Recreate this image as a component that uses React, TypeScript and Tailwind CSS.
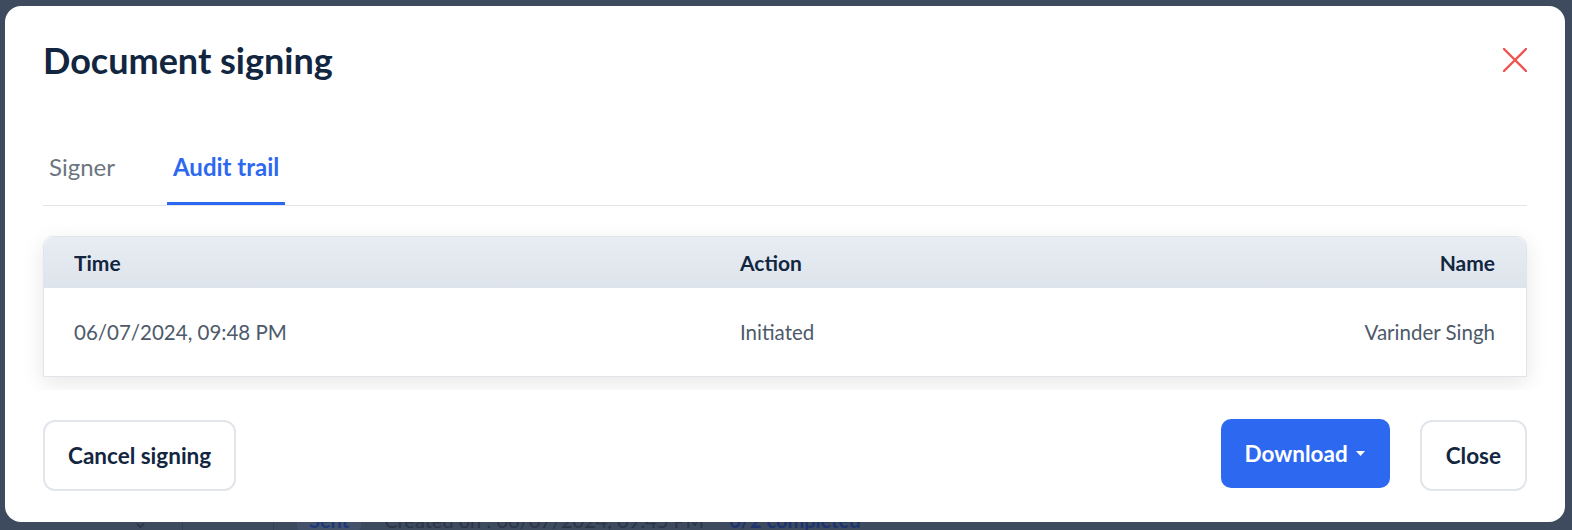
import React from "react";

function XIcon() {
  return (
    <svg width="24" height="24" viewBox="0 0 24 24" fill="none">
      <path d="M1 1L23 23M23 1L1 23" stroke="#ef5350" strokeWidth="2.4" strokeLinecap="round" />
    </svg>
  );
}

function Caret() {
  return (
    <svg width="9" height="5" viewBox="0 0 9 5">
      <path d="M0 0H9L4.5 5Z" fill="#ffffff" />
    </svg>
  );
}

export default function App() {
  return (
    <div className="relative h-[530px] w-[1572px] overflow-hidden bg-[#3e4b5e] font-['Lato',sans-serif]">
      {/* background page (dimmed) */}
      <div className="flex h-[24px] items-center pt-0 mt-[508px] text-[20px] leading-[24px]">
        <div className="ml-[132px] w-[12px] text-[#2b3646]">⌄</div>
        <div className="ml-[38px] h-[24px] w-px bg-[#364252]" />
        <div className="ml-[90px] h-[24px] w-px bg-[#364252]" />
        <div className="ml-[23px] rounded-[6px] bg-[#44536a] px-[12px] font-bold text-[#1e3a78]">Sent</div>
        <div className="ml-[23px] text-[#2a3546]">Created on : 06/07/2024, 09:45 PM</div>
        <div className="ml-[25px] font-bold text-[#1c3470]">0/2 completed</div>
      </div>

      {/* modal */}
      <div className="absolute left-[5px] top-[6px] flex h-[516px] w-[1560px] flex-col rounded-2xl bg-white">
        <div className="flex h-[40px] items-center justify-between px-[38px] mt-[34px]">
          <h1 className="text-[36px] leading-[40px] font-bold text-[#12263f]">Document signing</h1>
          <button className="flex h-[24px] w-[24px] items-center justify-center">
            <XIcon />
          </button>
        </div>

        <div className="mx-[38px] mt-[72px] flex gap-[46px] border-b border-[#e2e5ea]">
          <div className="px-[6px] pb-[21px] border-b-[3px] border-transparent text-[24px] leading-[29px] text-[#6c7581]">Signer</div>
          <div className="px-[6px] pb-[21px] border-b-[3px] border-[#2d68f0] text-[24px] leading-[29px] font-bold text-[#2d68f0]">Audit trail</div>
        </div>

        <div className="overflow-hidden px-[38px] pt-[30px] pb-[13px]">
          <div className="rounded-t-[10px] border border-[#e1e5ea] bg-white shadow-[0_6px_22px_rgba(15,23,42,0.10)]">
            <div className="grid h-[51px] grid-cols-[666px_1fr_auto] items-center rounded-t-[10px] bg-gradient-to-b from-[#e7edf3] to-[#dee4eb] pl-[30px] pr-[31px] text-[21px] font-bold text-[#12263f]">
              <div>Time</div>
              <div>Action</div>
              <div className="text-right">Name</div>
            </div>
            <div className="grid h-[88px] grid-cols-[666px_1fr_auto] items-center pl-[30px] pr-[31px] text-[20.5px] text-[#4d5a6a]">
              <div>06/07/2024, 09:48 PM</div>
              <div>Initiated</div>
              <div className="text-right">Varinder Singh</div>
            </div>
          </div>
        </div>

        <div className="flex items-start justify-between px-[38px] pt-[29px]">
          <button className="mt-[1px] flex h-[71px] items-center rounded-[12px] border-2 border-[#e2e5ea] px-[23px] text-[22.5px] font-bold text-[#12263f]">
            Cancel signing
          </button>
          <div className="flex items-start gap-[30px]">
            <button className="flex h-[69px] items-center gap-[8px] rounded-[10px] bg-[#2d68f0] pl-[24px] pr-[25px] text-[22.5px] font-bold text-white">
              Download
              <Caret />
            </button>
            <button className="mt-[1px] flex h-[71px] items-center rounded-[12px] border-2 border-[#e2e5ea] px-[24px] text-[22.5px] font-bold text-[#12263f]">
              Close
            </button>
          </div>
        </div>
      </div>
    </div>
  );
}
